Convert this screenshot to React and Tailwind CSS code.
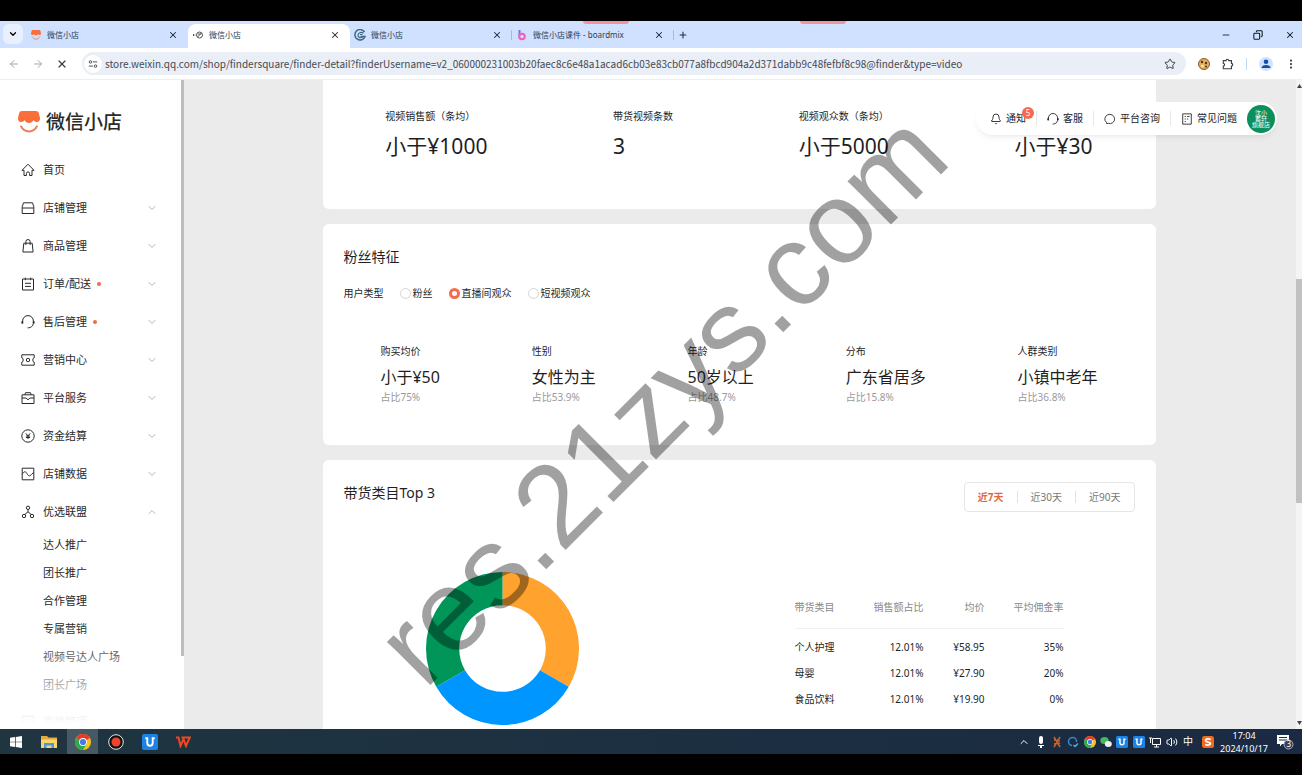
import { useState } from "react";
import {
  ArrowLeft,
  ArrowRight,
  Bell,
  ChevronDown,
  ChevronUp,
  Copy,
  EllipsisVertical,
  Minus,
  Plus,
  Star,
  Volume2,
  X,
} from "lucide-react";

const iconPaths = {
  home: (
    <>
      <path d="M1 7.3 7 1.2l6 6.1h-2v5.2H8.6v-2a1.6 1.6 0 0 0-3.2 0v2H3V7.3z" />
    </>
  ),
  shop: (
    <>
      <path d="M2.5 1.8h9l1.3 4v6.7H1.2V5.8z" />
      <path d="M1.2 7h11.6" />
    </>
  ),
  bag: (
    <>
      <path d="M2.8 4.2h8.4l.9 8.8H1.9z" />
      <path d="M4.9 6V2.6a2.1 2.1 0 0 1 4.2 0V6" />
    </>
  ),
  order: (
    <>
      <path d="M1.5 2h11v11h-11z" />
      <path d="M4.3.6v2.6M9.7.6v2.6M4 6.3h6M4 9.4h6" />
    </>
  ),
  headset: (
    <>
      <path d="M1.6 8.6V6a5.4 5.4 0 0 1 10.8 0v2.6c-.7 2.4-2.2 4-4.6 4.2H6.6" />
      <path strokeWidth="1.8" d="M1.3 6.2v2.2M12.7 6.2v2.2" />
    </>
  ),
  ticket: (
    <>
      <path d="M.8 1.8h12.4v3.1a1.4 2.1 0 0 0 0 4.2v3.1H.8V9.1a1.4 2.1 0 0 0 0-4.2z" />
      <circle cx="7" cy="7" r="1.7" />
    </>
  ),
  service: (
    <>
      <path d="M1 3.8h12v8.7H1zM1 7h4l2 1.8L9 7h4M3.8 3.6l.7-1.9h5l.7 1.9" />
    </>
  ),
  money: (
    <>
      <circle cx="7" cy="7" r="6.2" />
      <path d="m4.8 4.3 2.2 2.6 2.2-2.6M7 6.9V10M4.9 7h4.2M4.9 8.5h4.2" />
    </>
  ),
  data: (
    <>
      <path d="M1.2 1.2h11.6v11.6H1.2z" />
      <path d="M1.2 7.2C3 4.2 4.6 4 6 6.6s3 3 4.5.8l2.3-2.2" />
    </>
  ),
  union: (
    <>
      <circle cx="7" cy="2.8" r="1.7" />
      <circle cx="3" cy="11" r="1.7" />
      <circle cx="11" cy="11" r="1.7" />
      <path d="M7 4.5v2.3L3.8 9.5M7 6.8l3.2 2.7" />
    </>
  ),
  chat: <path d="M3 12.3 2.9 11a5.7 5.4 0 1 1 2 1.1z" />,
  doc: (
    <>
      <path d="M2 1h10v12H2z" />
      <path d="M4.3 4h1.4M7 4h3M4.3 7h1.4M7 7h1.5M4.3 10h1.4" />
    </>
  ),
  puzzle: (
    <path
      strokeWidth="1.3"
      d="M1.5 3h3.3a1.5 1.5 0 0 1 3 0H11v3.3a1.5 1.5 0 0 1 0 3V12.5H1.5V9.3a1.5 1.5 0 0 0 0-3z"
    />
  ),
};

const LineIcon = ({ name, className = "size-3.5" }) => (
  <svg
    viewBox="0 0 14 14"
    fill="none"
    stroke="currentColor"
    className={`shrink-0 ${className}`}
  >
    {iconPaths[name]}
  </svg>
);

const ShopLogo = ({ className }) => (
  <svg viewBox="0 0 22 22" className={className}>
    <path
      fill="#fa6e3c"
      d="M4 0h14c1.6 0 2.4.7 2.8 2L22 7c.3 2-1 4-3.2 4-1.6 0-2.8-.8-3.4-2-.6 1.7-2.2 3-4.4 3S7.2 10.7 6.6 9C6 10.2 4.800 11 3.2 11 1 11-.3 9 0 7l1.2-5C1.6.7 2.4 0 4 0z"
    />
    <path
      d="M3 15.3c3.5 6.9 12.5 6.9 16 0"
      fill="none"
      stroke="#ee8055"
      strokeWidth="1.9"
      strokeLinecap="round"
    />
  </svg>
);

const ChromeLogo = ({ className }) => (
  <svg viewBox="0 0 16 16" className={className}>
    <circle cx="8" cy="8" r="8" fill="#fbc116" />
    <path d="M8 8 1.07 4A8 8 0 0 1 14.93 4z" fill="#e33b2e" />
    <path d="M8 8 1.07 4A8 8 0 0 0 8 16l3.5-6z" fill="#2da94f" />
    <circle cx="8" cy="8" r="3.9" fill="#fff" />
    <circle cx="8" cy="8" r="3.1" fill="#3f7de8" />
  </svg>
);

const SwirlIcon = () => (
  <svg viewBox="0 0 12 12" fill="none" stroke="#3d6787" className="size-3">
    <path strokeWidth="1.5" d="M10.5 3A5.2 5.2 0 1 0 11 7.5H6.5" />
    <path
      strokeWidth="1.2"
      d="M9.5 4.2C7 2.5 4 4 4 6.3c0 2.4 3 3.2 4.5 1.5M8.5 5.5H6"
    />
  </svg>
);

const BoardmixIcon = () => (
  <svg viewBox="0 0 10 12" fill="none" className="size-3">
    <path d="M2.5 1v6" stroke="#7d6be8" strokeWidth="2" />
    <circle cx="5" cy="7.5" r="2.8" stroke="#ee62b4" strokeWidth="2" />
  </svg>
);

const LoadingIcon = () => (
  <svg viewBox="0 0 12 12" fill="none" stroke="#555" className="size-3">
    <circle cx="7.5" cy="6" r="3" />
    <path d="M5.5 8 9.5 4M6 5h3M1.5 5v2M3 5.5v1" />
  </svg>
);

const tabs = [
  { title: "微信小店", icon: <ShopLogo className="size-2.5" /> },
  { title: "微信小店", icon: <LoadingIcon /> },
  { title: "微信小店", icon: <SwirlIcon /> },
  { title: "微信小店课件 - boardmix", icon: <BoardmixIcon /> },
];

const menu = [
  { label: "首页", icon: "home", leaf: true },
  { label: "店铺管理", icon: "shop" },
  { label: "商品管理", icon: "bag" },
  { label: "订单/配送", icon: "order", dot: true },
  { label: "售后管理", icon: "headset", dot: true },
  { label: "营销中心", icon: "ticket" },
  { label: "平台服务", icon: "service" },
  { label: "资金结算", icon: "money" },
  { label: "店铺数据", icon: "data" },
  { label: "优选联盟", icon: "union", open: true },
];

const subMenu = [
  "达人推广",
  "团长推广",
  "合作管理",
  "专属营销",
  "视频号达人广场",
  "团长广场",
];

const sales = [
  { label: "视频销售额（条均）", value: "小于¥1000" },
  { label: "带货视频条数", value: "3" },
  { label: "视频观众数（条均）", value: "小于5000" },
  { label: "", value: "小于¥30" },
];

const features = [
  { label: "购买均价", value: "小于¥50", ratio: "占比75%" },
  { label: "性别", value: "女性为主", ratio: "占比53.9%" },
  { label: "年龄", value: "50岁以上", ratio: "占比48.7%" },
  { label: "分布", value: "广东省居多", ratio: "占比15.8%" },
  { label: "人群类别", value: "小镇中老年", ratio: "占比36.8%" },
];

const categories = [
  { name: "个人护理", share: "12.01%", price: "¥58.95", rate: "35%" },
  { name: "母婴", share: "12.01%", price: "¥27.90", rate: "20%" },
  { name: "食品饮料", share: "12.01%", price: "¥19.90", rate: "0%" },
];

const TabBar = () => (
  <div className="relative flex h-[27px] shrink-0 items-end bg-[#cfe1fe]">
    <button
      aria-label="搜索标签页"
      className="mx-[3px] mb-1 flex size-5 items-center justify-center rounded-md bg-[#e8f0fe]"
    >
      <ChevronDown className="size-2.5 text-black" strokeWidth={3} />
    </button>
    {tabs.map((tab, i) => (
      <div
        key={i}
        className={
          i === 1
            ? "flex h-6 w-[162px] items-center rounded-t-lg bg-white pr-2.5 pb-0.5 pl-1"
            : "relative flex h-6 w-[162px] items-center pr-2.5 pb-0.5 pl-1"
        }
      >
        <span className="flex w-3 justify-center">{tab.icon}</span>
        <span className="ml-[5px] flex-1 truncate text-[8px] text-[#333b48]">
          {tab.title}
        </span>
        <button aria-label="关闭">
          <X className="size-2.5 text-[#222b3a]" strokeWidth={2.5} />
        </button>
        {i > 1 && (
          <span className="absolute top-1.5 right-0 h-2.5 w-px bg-[#a6bbe0]" />
        )}
      </div>
    ))}
    <button aria-label="新标签页" className="mb-2 ml-1">
      <Plus className="size-2.5 text-[#222b3a]" strokeWidth={2.5} />
    </button>
    <div className="ml-auto flex h-full items-center gap-[22px] pr-[7px] text-[#101820]">
      <button aria-label="最小化">
        <Minus className="size-2.5" />
      </button>
      <button aria-label="还原">
        <Copy className="size-2.5 -scale-x-100" strokeWidth={2.5} />
      </button>
      <button aria-label="关闭窗口">
        <X className="size-2.5" strokeWidth={2.5} />
      </button>
    </div>
    <span className="absolute top-0 left-[583px] h-[3px] w-[46px] rounded-b bg-[#f3939f]" />
    <span className="absolute top-0 left-[800px] h-[3px] w-[46px] rounded-b bg-[#f3939f]" />
  </div>
);

const Toolbar = () => (
  <div className="flex h-8 shrink-0 items-center border-b border-[#eceef1] bg-white pl-2 text-[#3c4043]">
    <div className="flex w-[74px] gap-3">
      <button aria-label="后退">
        <ArrowLeft className="size-3 text-[#a4a7ac]" />
      </button>
      <button aria-label="前进">
        <ArrowRight className="size-3 text-[#a4a7ac]" />
      </button>
      <button aria-label="停止">
        <X className="size-3" strokeWidth={2.5} />
      </button>
    </div>
    <div className="flex h-[23px] flex-1 items-center rounded-full bg-[#e9eef7] pr-2.5 pl-0.5">
      <span className="flex size-[18px] items-center justify-center rounded-full bg-white">
        <svg viewBox="0 0 12 12" fill="none" stroke="#333" className="size-2.5">
          <circle cx="3" cy="3.5" r="1.5" />
          <circle cx="9" cy="8.5" r="1.5" />
          <path d="M6 3.5h5M1 8.5h5" />
        </svg>
      </span>
      <input
        aria-label="地址"
        className="ml-[3px] flex-1 bg-transparent font-['Noto_Sans_CJK_SC',sans-serif] text-[10px] text-[#454a52] outline-none"
        defaultValue="store.weixin.qq.com/shop/findersquare/finder-detail?finderUsername=v2_060000231003b20faec8c6e48a1acad6cb03e83cb077a8fbcd904a2d371dabb9c48fefbf8c98@finder&type=video"
      />
      <button aria-label="收藏">
        <Star className="size-3" />
      </button>
    </div>
    <div className="flex items-center gap-3 pr-[5px] pl-3">
      <svg viewBox="0 0 12 12" className="size-3">
        <circle cx="6" cy="6" r="5.5" fill="#e0ad62" stroke="#8a5a25" />
        <circle cx="4" cy="4" r="1.2" fill="#553311" />
        <circle cx="8" cy="5" r="1.2" fill="#553311" />
        <circle cx="4.5" cy="8" r="1.2" fill="#fff1c8" />
        <circle cx="8" cy="8.6" r="1" fill="#553311" />
      </svg>
      <LineIcon name="puzzle" className="size-3" />
      <span className="h-3 w-px bg-[#c5d9f5]" />
      <svg viewBox="0 0 14 14" className="size-3.5">
        <circle cx="7" cy="7" r="7" fill="#cfe1fe" />
        <circle cx="7" cy="4.8" r="2.3" fill="#154ca8" />
        <path d="M2.5 11c0-4 9-4 9 0z" fill="#154ca8" />
      </svg>
      <EllipsisVertical className="size-3" strokeWidth={2.5} />
    </div>
  </div>
);

const Sidebar = () => (
  <aside className="relative w-[184px] shrink-0 overflow-hidden bg-white text-[11px] text-[#2a2a2a]">
    <div className="flex h-[71px] items-center gap-1.5 pt-3 pl-[18px]">
      <ShopLogo className="size-[22px]" />
      <span className="text-[19px] leading-7 font-medium">微信小店</span>
    </div>
    <nav>
      {menu.map((item) => (
        <a
          key={item.label}
          href="#"
          className="flex h-[38px] items-center pr-[26px] pl-[21px]"
        >
          <LineIcon name={item.icon} />
          <span className="ml-2">{item.label}</span>
          {item.dot && (
            <span className="ml-1.5 size-1 rounded-full bg-[#ef6a4c]" />
          )}
          {!item.leaf &&
            (item.open ? (
              <ChevronUp className="ml-auto size-3 text-[#b4b4b4]" />
            ) : (
              <ChevronDown className="ml-auto size-3 text-[#b4b4b4]" />
            ))}
        </a>
      ))}
      {subMenu.map((label) => (
        <a key={label} href="#" className="flex h-7 items-center pl-[43px]">
          {label}
        </a>
      ))}
      <a href="#" className="mt-1 flex h-[38px] items-center pl-[21px]">
        <LineIcon name="data" />
        <span className="ml-2">直播管理</span>
      </a>
    </nav>
    <div className="absolute inset-x-0 bottom-0 h-[100px] bg-linear-to-t from-white from-5% to-white/0" />
    <span className="absolute top-0 right-0 h-[576px] w-[3px] bg-[#bdbdbd]" />
  </aside>
);

const HelpBar = () => (
  <div className="absolute top-[22px] right-[19px] flex h-[33px] items-center rounded-full bg-white pr-0.5 pl-3.5 text-[10px] text-[#222] shadow-md shadow-black/5">
    <button className="relative flex items-center gap-1 pr-2.5">
      <Bell className="size-3" strokeWidth={1.8} />
      通知
      <span className="absolute -top-1 right-0.5 flex size-3 items-center justify-center rounded-full bg-[#f5694c] text-[8px] leading-3 text-white">
        5
      </span>
    </button>
    <button className="flex items-center gap-1 border-l border-[#e8e8e8] px-2.5">
      <LineIcon name="headset" className="size-3" />
      客服
    </button>
    <button className="flex items-center gap-1 border-l border-[#e8e8e8] px-2.5">
      <LineIcon name="chat" className="size-3" />
      平台咨询
    </button>
    <button className="flex items-center gap-1 border-l border-[#e8e8e8] px-2.5">
      <LineIcon name="doc" className="size-3" />
      常见问题
    </button>
    <span className="flex size-7 flex-col items-center justify-center rounded-full bg-[#0b8f5c] text-[6px] leading-[6px] text-white">
      <span>沈小</span>
      <span>蓄轩</span>
      <span>旗舰店</span>
    </span>
  </div>
);

const Donut = () => (
  <svg viewBox="-76 -76 152 152" className="size-[153px]">
    <path d="M0-76A76 76 0 0 1 65.82 38L37.24 21.5A43 43 0 0 0 0-43z" fill="#ffa22e" />
    <path d="M65.82 38A76 76 0 0 1-65.82 38L-37.24 21.5A43 43 0 0 0 37.24 21.5z" fill="#0096ff" />
    <path d="M-65.82 38A76 76 0 0 1 0-76V-43A43 43 0 0 0-37.24 21.5z" fill="#00965a" />
  </svg>
);

const Content = () => {
  const [audience, setAudience] = useState("直播间观众");
  const [range, setRange] = useState("近7天");

  return (
    <main className="relative min-w-0 flex-1 overflow-hidden bg-[#ebebeb] pr-0.5 text-[#1f1f1f]">
      <div className="mx-auto max-w-[833px] space-y-[15px]">
        <section className="flex justify-around rounded-b-md bg-white pt-7 pb-[47px]">
          {sales.map((item) => (
            <div key={item.value}>
              <div className="h-4 text-[10px] leading-4">{item.label}</div>
              <div className="mt-1.5 text-[21px] leading-8">{item.value}</div>
            </div>
          ))}
        </section>

        <section className="rounded-md bg-white pt-[23px] pb-10">
          <h2 className="px-[21px] text-sm leading-5">粉丝特征</h2>
          <div className="mt-[18px] flex px-[21px] text-[10px] leading-4">
            <span className="mr-4">用户类型</span>
            {["粉丝", "直播间观众", "短视频观众"].map((name) => (
              <label key={name} className="mr-4 flex items-center gap-0.5">
                <input
                  type="radio"
                  name="audience"
                  checked={audience === name}
                  onChange={() => setAudience(name)}
                  className="size-[11px] appearance-none rounded-full border border-[#d5d5d5] bg-white checked:border-[3px] checked:border-[#f26d4a]"
                />
                {name}
              </label>
            ))}
          </div>
          <div className="mt-[42px] flex justify-around px-3">
            {features.map((item) => (
              <div key={item.label}>
                <div className="text-[10px] leading-4">{item.label}</div>
                <div className="mt-1.5 text-base leading-6">{item.value}</div>
                <div className="text-[10px] leading-4 text-[#9a9a9a]">
                  {item.ratio}
                </div>
              </div>
            ))}
          </div>
        </section>

        <section className="rounded-md bg-white pt-[22px] pb-10">
          <div className="flex items-start justify-between px-[21px]">
            <h2 className="text-sm leading-[22px]">带货类目Top 3</h2>
            <div className="flex h-[30px] items-center rounded border border-[#e6e6e6] text-[10px] leading-3">
              {["近7天", "近30天", "近90天"].map((name) => (
                <button
                  key={name}
                  onClick={() => setRange(name)}
                  className={
                    range === name
                      ? "px-[13px] font-bold text-[#e2683c]"
                      : "border-l border-[#e2e2e2] px-[13px] text-[#777]"
                  }
                >
                  {name}
                </button>
              ))}
            </div>
          </div>
          <div className="mt-[60px] flex items-start">
            <div className="flex w-[43%] justify-center pl-0.5">
              <Donut />
            </div>
            <table className="mt-[27px] mr-[92px] ml-auto w-[269px] text-right text-[10px] leading-4">
              <thead>
                <tr className="border-b border-[#f1f1f1] text-[#8a8a8a]">
                  <th className="pb-[13px] text-left font-normal">带货类目</th>
                  <th className="w-16 pb-[13px] font-normal">销售额占比</th>
                  <th className="w-[61px] pb-[13px] font-normal">均价</th>
                  <th className="w-[79px] pb-[13px] font-normal">平均佣金率</th>
                </tr>
              </thead>
              <tbody>
                {categories.map((row) => (
                  <tr
                    key={row.name}
                    className="h-[26px] first:h-[31px] first:*:pt-[5px]"
                  >
                    <td className="text-left">{row.name}</td>
                    <td>{row.share}</td>
                    <td>{row.price}</td>
                    <td>{row.rate}</td>
                  </tr>
                ))}
              </tbody>
            </table>
          </div>
        </section>
      </div>
      <HelpBar />
    </main>
  );
};

const ScrollBar = () => (
  <div className="flex w-1.5 shrink-0 flex-col items-center bg-[#f4f4f4] py-1">
    <svg viewBox="0 0 6 4" className="w-1.5 fill-[#444]">
      <path d="M1 4 3.5 0 6 4z" />
    </svg>
    <span className="mt-[191px] h-56 w-full bg-[#c1c1c1]" />
    <svg viewBox="0 0 6 4" className="mt-auto w-1.5 fill-[#444]">
      <path d="m1 0 2.5 4L6 0z" />
    </svg>
  </div>
);

const BlueTile = ({ className }) => (
  <svg viewBox="0 0 16 16" className={className}>
    <rect width="16" height="16" rx="2" fill="#1c82e6" />
    <path
      d="M3.3 4.3h2v4.7a2.7 2.7 0 0 0 5.4 0V4.3h2"
      fill="none"
      stroke="#fff"
      strokeWidth="1.9"
    />
  </svg>
);

const TaskBar = () => (
  <footer className="flex h-[25px] shrink-0 items-center justify-between bg-linear-to-r from-[#1f3540] to-[#1a2a42] text-white">
    <div className="flex h-full items-center">
      <button aria-label="开始" className="flex w-[31px] justify-center">
        <svg viewBox="0 0 12 12" className="size-3 fill-white">
          <path d="M0 1.7 5 1v4.7H0zM5.7.9 12 0v5.7H5.7zM0 6.3h5V11l-5-.7zM5.7 6.3H12V12l-6.3-.9z" />
        </svg>
      </button>
      <button aria-label="文件资源管理器" className="flex w-9 justify-center">
        <svg viewBox="0 0 16 14" className="w-4">
          <path d="M0 1h6l1.5 1.5H16V13H0z" fill="#e5a93c" />
          <path d="M0 4.5h16V13H0z" fill="#fbd56e" />
          <path d="M3 13V8h10v5h-2.5v-2.5h-5V13z" fill="#4a9ad6" />
        </svg>
      </button>
      <button
        aria-label="Chrome"
        className="flex h-full w-[31px] items-center justify-center bg-[#465a66]"
      >
        <ChromeLogo className="size-4" />
      </button>
      <button aria-label="录屏" className="flex w-9 justify-center">
        <svg viewBox="0 0 16 16" className="size-4">
          <circle cx="8" cy="8" r="7.3" fill="#111" stroke="#e8e8e8" />
          <circle cx="8" cy="8" r="4.5" fill="#f0432b" />
        </svg>
      </button>
      <button aria-label="应用" className="flex w-8 justify-center">
        <BlueTile className="size-4" />
      </button>
      <button aria-label="WPS" className="flex w-[34px] justify-center">
        <svg viewBox="0 0 16 12" fill="none" className="w-4">
          <path
            d="M1 1.5h2.5L5.5 10 8.500 3l2.5 7 3.800-8.500H6.500"
            stroke="#f0481f"
            strokeWidth="2"
          />
        </svg>
      </button>
    </div>
    <div className="flex items-center gap-1 pr-2">
      <div className="flex w-[176px] items-center justify-between">
        <ChevronUp className="size-3" />
        <svg viewBox="0 0 12 12" className="size-3 fill-white">
          <rect x="4" y="0" width="4" height="8" rx="2" />
          <path d="M3 9h6v1H7v2H5v-2H3z" />
        </svg>
        <svg viewBox="0 0 12 12" fill="none" className="size-3">
          <path
            d="m3 1 6 10M9 1 3 11M3 4l6 1M3 8l6-1"
            stroke="#c8642b"
            strokeWidth="1.5"
          />
        </svg>
        <svg viewBox="0 0 12 12" fill="none" className="size-3">
          <path
            d="M9.5 6A4 4 0 1 0 5 9.5"
            stroke="#3a86cf"
            strokeWidth="1.5"
          />
          <path
            d="m6.5 9 1.5 1.5L11 7.5"
            stroke="#59aee0"
            strokeWidth="1.5"
          />
        </svg>
        <ChromeLogo className="size-3" />
        <svg viewBox="0 0 12 12" className="size-3">
          <ellipse cx="4.5" cy="4.5" rx="4.2" ry="3.6" fill="#45b85c" />
          <ellipse cx="8.3" cy="8" rx="3.5" ry="3" fill="#eee" />
        </svg>
        <BlueTile className="size-3" />
        <BlueTile className="size-3" />
        <svg viewBox="0 0 12 12" fill="none" stroke="#fff" className="size-3">
          <path d="M3.5 2.5h8v6h-8zM5 11h5M7.5 8.5V11M0 2h3M1.5 2v5" />
        </svg>
        <Volume2 className="size-3" />
        <span className="w-3 text-center text-[10px]">中</span>
      </div>
      <svg viewBox="0 0 12 12" className="ml-1 size-3">
        <rect width="12" height="12" rx="2.5" fill="#f36a1f" />
        <path
          d="M8.7 3.5C7 2.5 3.5 2.7 3.5 4.5S8.5 6 8.5 7.600 5 9.500 3.200 8.500"
          fill="none"
          stroke="#fff"
          strokeWidth="1.7"
        />
      </svg>
      <div className="mx-0.5 text-center text-[9px] leading-[13px]">
        <div>17:04</div>
        <div>2024/10/17</div>
      </div>
      <svg viewBox="0 0 18 16" className="ml-0.5 w-[18px]">
        <path d="M1 1h12v9H6l-2 2.5V10H1z" fill="#fff" />
        <path d="M3 3.5h8M3 6h8" stroke="#1a2a42" />
        <circle cx="12.5" cy="10.5" r="4.5" fill="#33415a" stroke="#aab" />
        <text x="10.5" y="13.3" fontSize="8" fill="#fff">
          3
        </text>
      </svg>
    </div>
  </footer>
);

const App = () => {
  return (
    <div className="relative flex h-screen flex-col overflow-hidden bg-black py-[21px] font-['Noto_Sans','Noto_Sans_CJK_SC',sans-serif]">
      <TabBar />
      <Toolbar />
      <div className="flex min-h-0 flex-1">
        <Sidebar />
        <Content />
        <ScrollBar />
      </div>
      <TaskBar />
      <div className="pointer-events-none absolute inset-0 flex items-center justify-center pt-5 pl-5">
        <span className="-rotate-45 font-['Liberation_Sans',sans-serif] text-[116px] leading-none text-black/37">
          res.21zys.com
        </span>
      </div>
    </div>
  );
};

export default App;
